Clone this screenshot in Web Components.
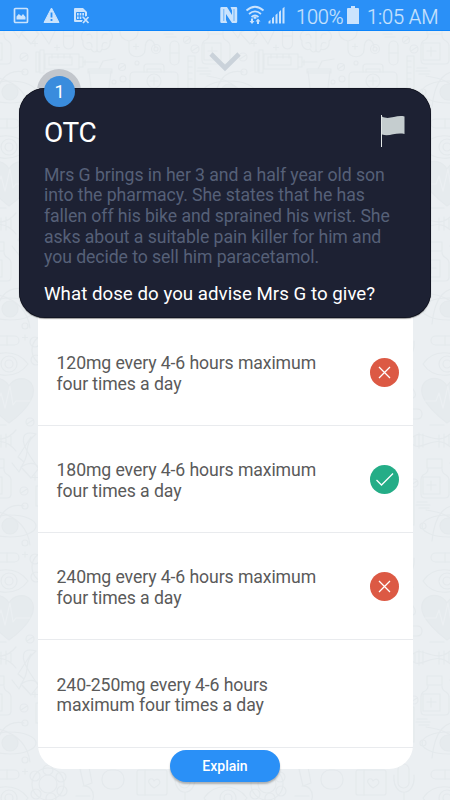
<!DOCTYPE html>
<html lang="en">
<head>
<meta charset="utf-8">
<title>OTC</title>
<style>
html,body{margin:0;height:100%;overflow:hidden}
body{font-family:Roboto,"Noto Sans",sans-serif;background:#ebeff2}
</style>
</head>
<body>
<quiz-screen>
  <status-bar slot="status" battery="100%" time="1:05 AM"></status-bar>
  <pull-handle></pull-handle>
  <question-card number="1">
    <span slot="title">OTC</span>
    <span slot="scenario">Mrs G brings in her 3 and a half year old son<br>into the pharmacy. She states that he has<br>fallen off his bike and sprained his wrist. She<br>asks about a suitable pain killer for him and<br>you decide to sell him paracetamol.</span>
    <span slot="question">What dose do you advise Mrs G to give?</span>
  </question-card>
  <answer-list>
    <answer-option state="wrong">120mg every 4-6 hours maximum<br>four times a day</answer-option>
    <answer-option state="right">180mg every 4-6 hours maximum<br>four times a day</answer-option>
    <answer-option state="wrong">240mg every 4-6 hours maximum<br>four times a day</answer-option>
    <answer-option>240-250mg every 4-6 hours<br>maximum four times a day</answer-option>
    <explain-button slot="action">Explain</explain-button>
  </answer-list>
</quiz-screen>
<script>
const define = (name, html) => customElements.define(name, class extends HTMLElement {
  constructor() {
    super();
    const t = document.createElement('template');
    t.innerHTML = typeof html === 'function' ? html(this) : html;
    this.attachShadow({mode: 'open'}).append(t.content.cloneNode(true));
  }
});

let tiles = '';
for (let r = -1; r < 4; r++) for (let c = -1; c < 3; c++)
  tiles += `<use href="#motif" x="${c * 219}" y="${r * 217}"/>`;

define('medical-pattern', `
<style>:host{display:block;position:absolute;inset:0;overflow:hidden}svg{display:block}</style>
<svg width="450" height="800" viewBox="0 0 450 800">
<defs><g id="motif" fill="none" stroke="#e4e9ec" stroke-width="1.2" stroke-linecap="round" stroke-linejoin="round">
  <path d="M208 25h15v9h-15zM209 35q0 4-5 6-2 2-2 5v14q0 4 4 4h20q4 0 4-4V46q0-3-3-5-4-2-4-6M204 43h17v17h-17zM212 47v9M208 51h9"/>
  <path d="M21 33c8-5 14-5 18 1l-8 10zM41 32l8 12 7-15M35 41v5M32.500 43.500h5M57 45v5M54.500 47.500h5"/>
  <rect x="63.500" y="23" width="10" height="26" rx="5"/><path d="M63.500 36h10"/>
  <path d="M97 25c-6-3-11 1-11 5-5 2-6 8-3 11-1 6 4 10 8 8 2 4 6 4 6 0V25c5-3 10 1 10 5 6 2 7 8 3 11 1 6-4 10-8 8-1 4-5 4-5 0M87 35c3-2 5 0 5 3M107 34c-4-1-5 1-5 4M87 43q5-2 5 4M107 43q-5-2-5 4"/>
  <path d="M120 27v5c0 6 4 8 9 9v9c0 9 16 9 16 0 0-14 9-12 10-3M138 27v5c0 6-4 8-9 9M136 44v5M133.500 46.500h5"/>
  <circle cx="156" cy="49" r="4.500"/><circle cx="156" cy="49" r="2"/>
  <rect x="170" y="41" width="9" height="24" rx="4.500"/><path d="M170 53h9M164 34h9M166 37h10"/>
  <circle cx="187" cy="40" r="3.500"/><path d="m185 42 5-4"/><circle cx="195" cy="49" r="4"/><path d="m192 51 6-4"/>
  <circle cx="24" cy="57" r="4"/><path d="m21 59 6-4"/>
  <path d="M36 52h3v20h-3zM40 50h4v23h-4zM45 54h34v15H45zM49 57h23v8H49zM79 57h4v10h-4zM83 62h15M85 60v5M52 54v4M58 54v4M64 54v4M70 54v4"/>
  <path d="M89 71h22l-3 25H92zM88 69h24v4H88zM99 69l4-8 12-2"/>
  <circle cx="122" cy="67" r="3.500"/><path d="m119 69 6-4"/><circle cx="137" cy="63" r="2"/><circle cx="114" cy="82" r="2"/><circle cx="123" cy="79" r="3"/>
  <rect x="130" y="72" width="48" height="28" rx="4"/><path d="M144 72v-5q0-3 3-3h14q3 0 3 3v5M147 72v-3h14v3"/><circle cx="154" cy="81" r="7"/><path d="M154 77v8M150 81h8"/>
  <path d="M188 56h7v35h-7zM188 61h4M188 67h4M188 73h4M188 79h4M198 68h10M197 71h14M200 74h10"/>
  <ellipse cx="10" cy="92" rx="26" ry="11"/><circle cx="10" cy="92" r="8" fill="#e6ebee"/>
  <path d="M-6 107q4-40 30-35M-12 76q38 5 42 35"/><circle cx="25" cy="72" r="3"/><circle cx="25" cy="109" r="3"/><circle cx="-15" cy="92" r="3"/>
  <rect x="-7" y="119" width="26" height="9" rx="4.500"/><path d="M7 119v9M25 118v5M22.500 120.500h5"/>
  <path d="M-15 147C-5 132 17 132 28 147 17 162-5 162-15 147z"/><circle cx="9" cy="147" r="8"/><circle cx="9" cy="147" r="4"/>
  <path d="M9 206C-17 186-20 173-13 165c8-7 18-3 22 4 4-7 15-11 22-3 7 9-1 25-22 40z" fill="#e6ebee"/><path d="M-13 184h11l3-8 4 15 5-22 3 19 3-4h14" stroke="#ebeff2"/>
  <circle cx="30" cy="205" r="4"/><path d="m27 207 6-4M-25 172q5 7 0 9-6-1 0-9zM-29 192h8q5 0 5 5t-5 5h-8M-8 208h14"/>
  <path d="M-28 224C-18 205-3 236 16 213M-28 224C-18 241-3 210 16 234M-23 219v9M-19 216v15M-15 217v13M1 218v12M6 217v13M11 219v10"/>
  <path d="M36 217c-14-4-17 5-6 22l8 12M36 217c-13 10-6 18-12 28l-6-5 13-20M24 245l-5 10-7-9"/>
  <circle cx="48" cy="133" r="16"/><circle cx="48" cy="133" r="9"/><circle cx="35" cy="125" r="5"/><circle cx="48" cy="119" r="5"/><circle cx="61" cy="126" r="5"/><circle cx="62" cy="140" r="5"/><circle cx="51" cy="147" r="5"/><circle cx="36" cy="143" r="5"/>
  <path d="m80 118 9-2 3 16-8 3zM83 135c14-1 15 22-4 22M76 145h14M73 158h26"/><rect x="102" y="119" width="22" height="19" rx="9"/>
  <rect x="137" y="119" width="30" height="25" rx="2"/><path d="M145 119v25M154 137q-8-6-4-9 3-1 4 2 2-3 5-1 3 4-5 8M111 156h28v15h-28zM147 153h15v18h-15z"/><path d="M114 159h4v4h-4zM121 159h4v4h-4zM128 159h4v4h-4z"/>
  <rect x="179" y="113" width="11" height="24" rx="5.500"/><path d="M175 124c-2 23 22 23 20 0M185 142v10M176 153h18"/>
</g></defs>${tiles}</svg>`);

define('quiz-screen', `
<style>
:host{display:flex;flex-direction:column;position:relative;width:450px;height:800px;overflow:hidden;background:#ebeff2}
main{display:flex;flex-direction:column;align-items:center;position:relative}
</style>
<medical-pattern></medical-pattern><slot name="status"></slot><main><slot></slot></main>`);

define('status-bar', el => `
<style>
:host{display:flex;position:relative;height:31px;box-sizing:border-box;background:#2a90f7;border-bottom:1px solid #0b84fb;color:#cae3fd;align-items:center;justify-content:space-between;padding:0 12px 0 13px}
.group{display:flex;align-items:center;height:31px}
.left{gap:14px}svg{display:block}
.text{font-size:20px;font-weight:300;line-height:31px;padding-top:4px;white-space:nowrap;-webkit-text-stroke:.2px #cae3fd}
.pct{letter-spacing:-.2px;margin-left:10px;width:49px}.time{margin-left:8px;width:71px;letter-spacing:-.1px}
</style>
<div class="group left">
<svg width="16" height="17" viewBox="0 0 16 17"><rect x="1.500" y="1.500" width="13" height="14" rx="1" fill="none" stroke="#cae3fd" stroke-width="1.700"/><path d="M3.500 12.500V9.500l2.300-2.500 2.500 2 1.700-2 2.500 3v2.500z" fill="#cae3fd"/></svg>
<svg width="17" height="17" viewBox="0 0 17 17"><path d="M8.500 1 16 15.500H1z" fill="#cae3fd" stroke="#cae3fd" stroke-linejoin="round"/><path d="M8.500 5.500v5M8.500 12v2" stroke="#2a90f7" stroke-width="1.800"/></svg>
<svg width="16" height="17" viewBox="0 0 16 17"><path d="M1 1h8l4 4v4l-3 1-2 5H1q-1 0-1-1V2q0-1 1-1" fill="#cae3fd"/><path d="M2.500 5.500h8v7h-8zM5.200 5.500v7M7.800 5.500v7M2.500 9h8" fill="none" stroke="#2a90f7"/><path d="m9 10 5.500 6M14.500 10 9 16" stroke="#2a90f7" stroke-width="3.500"/><path d="m9 10 5.500 6M14.500 10 9 16" stroke="#cae3fd" stroke-width="1.700"/></svg>
</div>
<div class="group">
<svg width="66" height="20" viewBox="0 0 66 20" fill="#cae3fd">
<path d="M1.500 2H7l5 8V5.500L10.500 2H16q1.200 0 1.200 1.200v13.600q0 1.200-1.200 1.200h-4L6 9v6l1.300 3H1.500Q.3 18 .3 16.800V3.200Q.3 2 1.500 2"/><path d="M3.800 4v12M14 4v12" stroke="#2a90f7" stroke-width=".6"/>
<g fill="none" stroke="#cae3fd" stroke-width="1.700"><path d="M26.500 5.500q8.500-7.500 17 0M29 9q6-5.300 12 0M31.500 12q3.500-3 7 0"/></g>
<path d="m35 11 2 2-2 1-2-1zM31 13.500h2v2.500h1.500L32 19l-2.500-3H31zM37 19h2v-2.500h1.500L38 13.500 35.500 16.500H37z"/>
<path d="M48.500 18.500v-2l2-1.700v3.700zM52 18.500v-5.200l2-1.800v7zM55.500 18.500V10l2-1.800v10.300zM59 18.500V7l2-1.900v13.400zM62.500 18.500v-15l2-1.700v16.700z"/>
</svg>
<span class="text pct">${el.getAttribute('battery')}</span>
<svg width="12" height="19" viewBox="0 0 12 19" style="margin-left:2px"><path d="M4 0h4v2h3q1 0 1 1v15H0V3q0-1 1-1h3z" fill="#cae3fd"/></svg>
<span class="text time">${el.getAttribute('time')}</span>
</div>`);

define('pull-handle', `
<style>:host{display:flex;height:57px;justify-content:center;box-sizing:border-box;padding-top:20px}</style>
<svg width="32" height="22" viewBox="0 0 32 22"><path d="m2 3 14 14L30 3" fill="none" stroke="#cad2da" stroke-width="4.700"/></svg>`);

define('question-card', el => `
<style>
:host{display:flex;flex-direction:column;position:relative;z-index:1;width:412px;height:230px;box-sizing:border-box;border-radius:26px;background:#1d2133;box-shadow:inset 0 0 0 .5px #080a14,0 .5px 1px #0006;color:#fff;padding:26px 25px 0}
.halo{position:absolute;z-index:-1;left:18px;top:-19px;width:44px;height:19px;overflow:hidden}
.halo::before{content:"";display:block;width:44px;height:44px;border-radius:50%;background:#c2c6cc}
.badge{position:absolute;left:25px;top:-12px;width:31px;height:31px;border-radius:50%;background:#3a8cdd;display:grid;place-items:center;font-size:18px;line-height:31px}
header{display:flex;justify-content:space-between;height:50.600px}
.title{font-size:28px;line-height:38px;letter-spacing:-.4px}
.scenario{font-size:17.660px;letter-spacing:-.07px;line-height:20.700px;color:#566078;white-space:nowrap}
.question{font-size:18.700px;letter-spacing:.03px;line-height:22px;margin-top:15px;white-space:nowrap}
</style>
<div class="halo"></div><div class="badge">${el.getAttribute('number')}</div>
<header><div class="title"><slot name="title"></slot></div>
<svg width="26" height="34" viewBox="0 0 26 34"><path d="M1.500 1v32" stroke="#e3e8e8"/><path d="M2 2.500c7 4 14-2 22.500 0v17.500c-9-2-15 3-22.500 .5z" fill="#c5cdcf"/></svg></header>
<div class="scenario"><slot name="scenario"></slot></div>
<div class="question"><slot name="question"></slot></div>`);

define('answer-list', `
<style>:host{display:flex;flex-direction:column;position:relative;width:375px;height:451px;box-sizing:border-box;padding-top:.6px;background:#fff;border-radius:0 0 24px 24px}
.action{position:absolute;left:132.500px;top:432px}</style>
<slot></slot><div class="action"><slot name="action"></slot></div>`);

const marks = {
  wrong: '<circle cx="14.500" cy="14.500" r="14.500" fill="#dc5944"/><path d="m9 9 11 11M20 9 9 20" stroke="#fff" stroke-width="1.300"/>',
  right: '<circle cx="14.500" cy="14.500" r="14.500" fill="#24ad87"/><path d="m6.500 15 5 5L23 8.500" fill="none" stroke="#fff" stroke-width="1.300"/>'
};
define('answer-option', el => `
<style>:host{display:flex;align-items:center;justify-content:space-between;height:107.300px;box-sizing:border-box;border-bottom:1px solid #e9ebee;padding:1px 14px 0 19px;font-size:17.660px;letter-spacing:-.1px;line-height:20.700px;color:#5a5a5a;white-space:nowrap}svg{display:block}div{padding-top:2.600px}</style>
<div><slot></slot></div>${marks[el.getAttribute('state')] ? `<svg width="29" height="29" viewBox="0 0 29 29">${marks[el.getAttribute('state')]}</svg>` : ''}`);

define('explain-button', `
<style>:host{display:flex;align-items:center;justify-content:center;width:110px;height:31.500px;border-radius:16px;background:#2a90f7;color:#fff;font-size:14px;font-weight:500;box-shadow:0 2px 2px #0004}</style>
<slot></slot>`);
</script>
</body>
</html>
